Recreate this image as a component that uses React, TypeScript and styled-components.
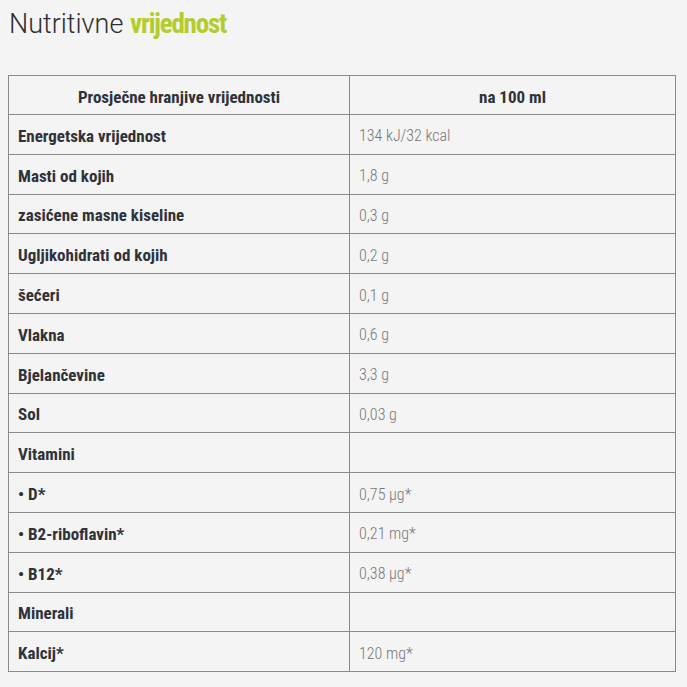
import React from 'react';
import styled, { createGlobalStyle } from 'styled-components';

const GlobalStyle = createGlobalStyle`
  html, body {
    margin: 0;
    padding: 0;
    background: #f4f4f4;
  }
  body {
    font-family: Roboto, "DejaVu Sans Condensed", sans-serif;
  }
`;

const Page = styled.div`
  padding: 8px 11px 0 8px;
`;

const Title = styled.h2`
  margin: 0 0 35px 1px;
  font-size: 27px;
  line-height: 32px;
  font-weight: 300;
  color: #2e2e2e;

  span {
    font-weight: 700;
    font-stretch: 80%;
    letter-spacing: -1.2px;
    color: #b3cc2c;
  }
`;

const Table = styled.table`
  width: 100%;
  table-layout: fixed;
  border-collapse: collapse;
`;

const Row = styled.tr<{ $head?: boolean }>`
  height: ${(p) => (p.$head ? '39px' : '39.8px')};
`;

const Cell = styled.td<{ $head?: boolean; $value?: boolean }>`
  padding: 3px 9px 0;
  border: 1px solid #8a8a8a;
  text-align: ${(p) => (p.$head ? 'center' : 'left')};
  font-size: ${(p) => (p.$value ? '16px' : '17px')};
  font-weight: ${(p) => (p.$value ? 300 : 700)};
  font-stretch: ${(p) => (p.$value ? '81%' : '75%')};
  color: ${(p) => (p.$value ? '#777' : '#2f3238')};
`;

const rows: [string, string][] = [
  ['Energetska vrijednost', '134 kJ/32 kcal'],
  ['Masti od kojih', '1,8 g'],
  ['zasićene masne kiseline', '0,3 g'],
  ['Ugljikohidrati od kojih', '0,2 g'],
  ['šećeri', '0,1 g'],
  ['Vlakna', '0,6 g'],
  ['Bjelančevine', '3,3 g'],
  ['Sol', '0,03 g'],
  ['Vitamini', ''],
  ['• D*', '0,75 µg*'],
  ['• B2-riboflavin*', '0,21 mg*'],
  ['• B12*', '0,38 µg*'],
  ['Minerali', ''],
  ['Kalcij*', '120 mg*'],
];

export default function App() {
  return (
    <Page>
      <GlobalStyle />
      <Title>
        Nutritivne <span>vrijednost</span>
      </Title>
      <Table>
        <colgroup>
          <col style={{ width: '341px' }} />
          <col />
        </colgroup>
        <thead>
          <Row $head>
            <Cell as="th" $head>Prosječne hranjive vrijednosti</Cell>
            <Cell as="th" $head>na 100 ml</Cell>
          </Row>
        </thead>
        <tbody>
          {rows.map(([label, value]) => (
            <Row key={label}>
              <Cell>{label}</Cell>
              <Cell $value>{value}</Cell>
            </Row>
          ))}
        </tbody>
      </Table>
    </Page>
  );
}
